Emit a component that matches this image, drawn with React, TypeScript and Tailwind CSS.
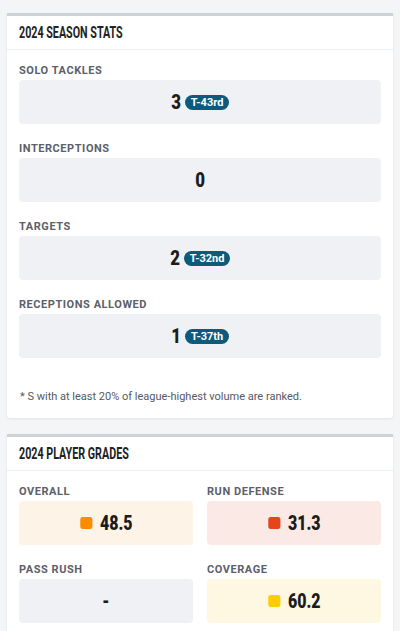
type Stat = { label: string; value: string; rank?: string };

const STATS: Stat[] = [
  { label: "Solo Tackles", value: "3", rank: "T-43rd" },
  { label: "Interceptions", value: "0" },
  { label: "Targets", value: "2", rank: "T-32nd" },
  { label: "Receptions Allowed", value: "1", rank: "T-37th" },
];

type Grade = { label: string; value: string; bg: string; dot?: string };

const GRADES: Grade[] = [
  { label: "Overall", value: "48.5", bg: "bg-[#fdf3e6]", dot: "bg-[#fb8c00]" },
  { label: "Run Defense", value: "31.3", bg: "bg-[#fbe9e5]", dot: "bg-[#e4461a]" },
  { label: "Pass Rush", value: "-", bg: "bg-[#f0f1f4]" },
  { label: "Coverage", value: "60.2", bg: "bg-[#fef8e3]", dot: "bg-[#ffcc00]" },
];

function Card({ title, children }: { title: string; children: React.ReactNode }) {
  return (
    <div className="rounded-b-[3px] border-t-[3px] border-[#cdd2d9] bg-white shadow-[0_1px_3px_rgba(0,0,0,0.08)]">
      <div className="flex h-[34px] items-center border-b border-[#eceef1] px-3">
        <h2 className="inline-block origin-left scale-x-[0.67] whitespace-nowrap text-[16px] font-bold uppercase text-[#222]">
          {title}
        </h2>
      </div>
      {children}
    </div>
  );
}

function Label({ children }: { children: React.ReactNode }) {
  return (
    <div className="mb-[1px] text-[11px] font-bold uppercase leading-[16px] tracking-[0.05em] text-[#5c6069]">
      {children}
    </div>
  );
}

export default function App() {
  return (
    <div className="min-h-screen bg-[#f4f5f7] px-[7px] pt-[13px]" style={{ fontFamily: "Roboto, sans-serif" }}>
      <Card title="2024 Season Stats">
        <div className="px-3 pt-[13px] pb-[13px]">
          <div className="flex flex-col gap-[17px]">
            {STATS.map((s) => (
              <div key={s.label}>
                <Label>{s.label}</Label>
                <div className="flex h-[44px] items-center justify-center gap-[4px] rounded-[4px] bg-[#f0f1f4]">
                  <span className="-mx-[1px] inline-block scale-x-[0.8] text-[21px] font-black leading-none text-[#1c1c1c]">
                    {s.value}
                  </span>
                  {s.rank && (
                    <span className="rounded-full bg-[#0c5b7d] px-[6px] text-[11px] font-bold leading-[15px] text-white">
                      {s.rank}
                    </span>
                  )}
                </div>
              </div>
            ))}
          </div>
          <p className="mt-[31px] pl-[1px] text-[11px] leading-[16px] text-[#55595f]">
            * S with at least 20% of league-highest volume are ranked.
          </p>
        </div>
      </Card>
      <div className="h-[16px]" />
      <Card title="2024 Player Grades">
        <div className="grid grid-cols-2 gap-x-[14px] gap-y-[17px] px-3 pt-[13px] pb-4">
          {GRADES.map((g) => (
            <div key={g.label}>
              <Label>{g.label}</Label>
              <div className={`flex h-[44px] items-center justify-center rounded-[4px] ${g.bg}`}>
                <div className="flex scale-x-[0.76] items-center gap-[10px]">
                  {g.dot && <span className={`h-[12px] w-[16px] rounded-[3px] ${g.dot}`} />}
                  <span className="text-[21px] font-black leading-none text-[#1c1c1c]">{g.value}</span>
                </div>
              </div>
            </div>
          ))}
        </div>
      </Card>
    </div>
  );
}
